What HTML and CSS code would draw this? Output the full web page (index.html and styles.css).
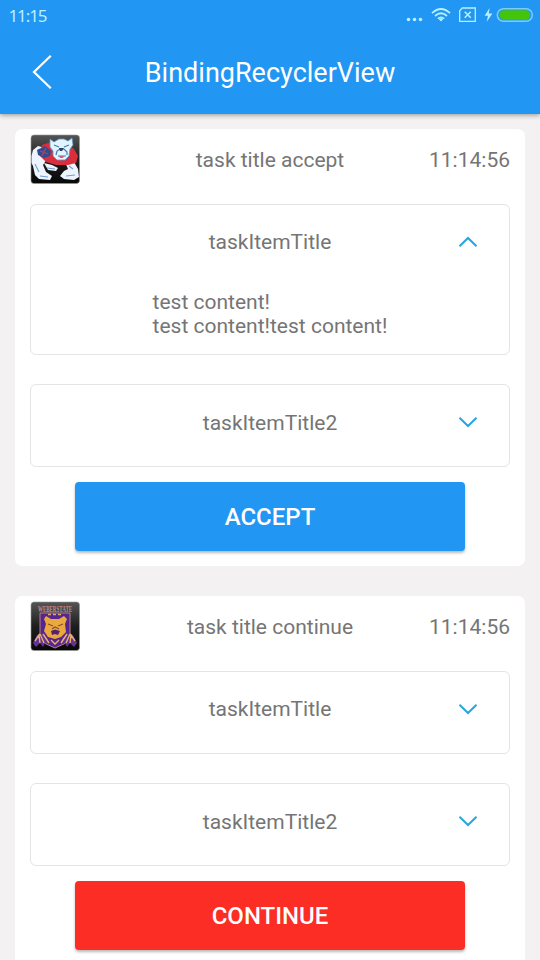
FILE: index.html
```html
<!DOCTYPE html>
<html lang="en">
<head>
<meta charset="utf-8">
<title>BindingRecyclerView</title>
<link rel="stylesheet" href="styles.css">
</head>
<body>
<header class="appbar">
  <div class="status">
    <span class="clock">11:15</span>
    <svg class="status-icons" width="136" height="30" viewBox="0 0 136 30" fill="none" stroke="#b9f0ff">
      <g fill="#b9f0ff" stroke="none"><circle cx="4.5" cy="19.5" r="1.8"/><circle cx="10.5" cy="19.5" r="1.8"/><circle cx="16.5" cy="19.5" r="1.8"/></g>
      <g stroke-width="1.7"><path d="M28 13.2Q37 4.8 46 13.2M31 16Q37 10.5 43 16M33.8 18.6Q37 16 40.2 18.6"/></g>
      <path d="M34.8 19.2Q37 17.5 39.2 19.2L37 21.6Z" fill="#b9f0ff" stroke="none"/>
      <path d="M58.2 8H71.3V21.3H55.7V10.7Z" stroke-width="1.3"/>
      <path d="M60.7 11.7l6 6M66.7 11.7l-6 6" stroke-width="1.6"/>
      <path d="M85.6 8L80.6 15.8H84L82.6 22L88.4 13.5H84.7Z" fill="#b9f0ff" stroke="none"/>
      <rect x="93.3" y="8.7" width="35" height="12.6" rx="6.3" stroke="#82cafa" stroke-width="1.5"/>
      <rect x="95.5" y="10.2" width="30.5" height="9.6" rx="4.5" fill="#43c50b" stroke="none"/>
    </svg>
  </div>
  <div class="toolbar">
    <svg class="back" width="24" height="40" viewBox="0 0 24 40" fill="none" stroke="#fff" stroke-width="2.2"><path d="M20.8 3.7L4 20L20.8 36.3"/></svg>
    <h1>BindingRecyclerView</h1>
  </div>
</header>
<main class="list">
  <section class="card">
    <div class="card-head">
      <svg class="logo" width="50" height="50" viewBox="0 0 50 50">
        <defs><linearGradient id="tile" x1="0" y1="0" x2="0" y2="1"><stop offset="0" stop-color="#555"/><stop offset=".5" stop-color="#1e1e1e"/><stop offset="1" stop-color="#080808"/></linearGradient></defs>
        <rect x="1" y="1" width="48.5" height="48.5" rx="3" fill="url(#tile)" stroke="#999" stroke-width=".6"/>
        <path d="M3 16L8 12L15 14L17 25L13 31L16 38L22 42L20 46L9 45L5 41L3 32L1.5 29V22Z" fill="#eef4ff"/>
        <path d="M35 28L44 28L48 35L49 43L44 46L34 45L30 42L34 37L38 35Z" fill="#eef4ff"/>
        <path d="M12 11L21 8L37 10L44 15L48 22L46 29L38 31L26 31L16 28L10 22Z" fill="#d92f3c"/>
        <path d="M7 16L15 12L21 17L20 22L14 24L8 21Z" fill="#304c8e"/>
        <path d="M10 17l8 3M12 22l4-8" stroke="#a7466a" stroke-width="1.2"/>
        <path d="M14 29L22 31L28 34L26 37L18 36Z" fill="#eef4ff"/>
        <path d="M5 30l4 8M10 42l8 1M17 34l8 1M36 42l9-1M39 32l4 3" fill="none" stroke="#6d9fd0" stroke-width="1.1"/>
        <path d="M20 5L24 8L29 5H34L38 7L42 4L43 11L40 15L39 22L35 26L27 26L23 22L23 17L20 13Z" fill="#e2f4ff" stroke="#5d98cd" stroke-width=".8"/>
        <path d="M24 11l5 2M39 11l-5 2M26 21l1-4l3-2h4l3 3v3M28 22h8" fill="none" stroke="#467aae" stroke-width="1.2"/>
        <path d="M29 14h5l-2 3h-2z" fill="#294461"/><path d="M29 22h5l-1 2h-3z" fill="#cf6478"/>
      </svg>
      <span class="name">task title accept</span>
      <time>11:14:56</time>
    </div>
    <div class="item open">
      <div class="item-head"><span>taskItemTitle</span>
        <svg class="chevron" width="20" height="12" viewBox="0 0 20 12"><path d="M1.5 10.2L10 2L18.5 10.2"/></svg></div>
      <p>test content!<br>test content!test content!</p>
    </div>
    <div class="item">
      <div class="item-head"><span>taskItemTitle2</span>
        <svg class="chevron" width="20" height="12" viewBox="0 0 20 12"><path d="M1.5 1.8L10 10L18.5 1.8"/></svg></div>
    </div>
    <button class="action accept">ACCEPT</button>
  </section>
  <section class="card">
    <div class="card-head">
      <svg class="logo" width="50" height="50" viewBox="0 0 50 50">
        <rect x="1" y="1" width="48.5" height="48.5" rx="3" fill="url(#tile)" stroke="#999" stroke-width=".6"/>
        <path d="M10 12H40V34L36 42L25 47L14 42L10 34Z" fill="#57258f" stroke="#b58486" stroke-width="1"/>
        <text class="crest" transform="translate(25 10.5) scale(1 1.6)" text-anchor="middle">WEBERSTATE</text>
        <path d="M18 13.5h3M23 13.5h3M28 13.5h3" stroke="#d9a582" stroke-width="1.4"/>
        <path d="M14 18L16 15L21 18H29L34 15L37 18L35 23L36 31L31 36L25 38L18 36L14 30L16 23Z" fill="#e9a93d"/>
        <path d="M18 23l5 2M33 23l-5 2M22 28l3-2l4 2" fill="none" stroke="#8b4b30" stroke-width="1.1"/>
        <path d="M21 30L25 28.5L30 30L28 34L25 33L22 34Z" fill="#51246f"/>
        <path d="M3 42L7 34L12 32L18 37L20 44L15 42L13 46L10 42L6 46Z" fill="#643294"/>
        <path d="M47 42L43 34L38 32L32 37L30 44L35 42L37 46L40 42L44 46Z" fill="#643294"/>
        <path d="M5 40l4-6l1 8M10 33l4 9M13 33l6 9M45 40l-4-6l-1 8M40 33l-4 9M37 33l-6 9M21 39l4 4l4-4" fill="none" stroke="#e6b070" stroke-width="1.4"/>
      </svg>
      <span class="name">task title continue</span>
      <time>11:14:56</time>
    </div>
    <div class="item">
      <div class="item-head"><span>taskItemTitle</span>
        <svg class="chevron" width="20" height="12" viewBox="0 0 20 12"><path d="M1.5 1.8L10 10L18.5 1.8"/></svg></div>
    </div>
    <div class="item">
      <div class="item-head"><span>taskItemTitle2</span>
        <svg class="chevron" width="20" height="12" viewBox="0 0 20 12"><path d="M1.5 1.8L10 10L18.5 1.8"/></svg></div>
    </div>
    <button class="action continue">CONTINUE</button>
  </section>
</main>
</body>
</html>
```

FILE: styles.css
```css
* { box-sizing: border-box; }
html, body { height: 960px; overflow: hidden; }
body {
  margin: 0;
  background: #f3f1f2;
  color: #757575;
  font: 21px/25px Roboto, sans-serif;
}
svg { display: block; flex: none; }
.appbar {
  height: 114px;
  background: #2196f3;
  color: #fff;
  box-shadow: 0 1px 5px rgba(0, 0, 0, .4);
}
.status {
  height: 30px;
  padding-left: 8.5px;
  display: flex;
  justify-content: space-between;
  align-items: center;
}
.clock {
  font: 17px/30px "Noto Sans", sans-serif;
  letter-spacing: -1.1px;
  color: #b9f0ff;
  padding-top: 1px;
}
.toolbar {
  height: 84px;
  padding: 0 30px;
  display: grid;
  grid-template-columns: 24px 1fr 24px;
  align-items: center;
}
h1 { margin: 2px 0 0; font-size: 27px; line-height: 32px; font-weight: 400; text-align: center; }
.list {
  padding: 15px;
  display: flex;
  flex-direction: column;
  gap: 30px;
}
.card { background: #fff; border-radius: 7px; padding: 5px 15px 15px; }
.card-head {
  height: 50px;
  margin-bottom: 20px;
  display: grid;
  grid-template-columns: 90px 1fr 90px;
  align-items: center;
}
.name { text-align: center; }
time { text-align: right; }
.name, time { padding-top: 2px; white-space: nowrap; }
.crest { font: bold 5px "Liberation Serif", serif; fill: #cb8b8a; }
.item {
  height: 83px;
  border: 1px solid #e4e4e4;
  border-radius: 6px;
}
.item + .item { margin-top: 29px; }
.item.open { height: 151px; }
.item-head {
  height: 73px;
  padding: 0 31px;
  display: grid;
  grid-template-columns: 20px 1fr 20px;
  align-items: center;
}
.item-head span { grid-column: 2; text-align: center; padding-top: 1px; }
.item + .item .item-head span { padding-top: 3px; }
.chevron { fill: none; stroke: #26a5e4; stroke-width: 2; }
.item p { width: max-content; margin: 11.6px auto 0; line-height: 24.6px; }
.action {
  display: block;
  width: 390px;
  height: 69px;
  margin: 15px auto 0;
  padding: 0;
  border: 0;
  border-radius: 4px;
  color: #fff;
  font: 500 24px/28px Roboto, sans-serif;
  box-shadow: 0 2px 3px rgba(0, 0, 0, .28);
}
.accept { background: #2196f3; }
.continue { background: #fb2d25; }
```
